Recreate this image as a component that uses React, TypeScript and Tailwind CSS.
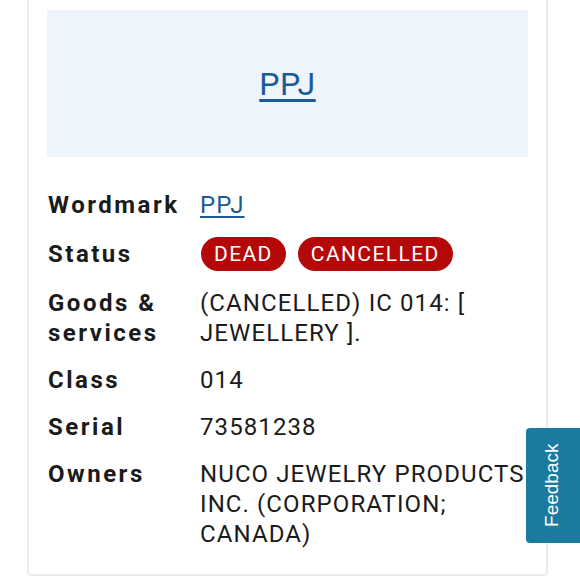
import React from 'react';

const rows: { label: React.ReactNode; value: React.ReactNode }[] = [
    {
        label: 'Wordmark',
        value: <a href="#" className="text-[#1a5a96] underline underline-offset-[3px]">PPJ</a>,
    },
    {
        label: 'Status',
        value: (
            <div className="flex gap-[12px] ml-[1px]">
                <span className="rounded-full bg-[#b50909] text-white px-[13px] h-[34px] flex items-center">DEAD</span>
                <span className="rounded-full bg-[#b50909] text-white px-[13px] h-[34px] flex items-center">CANCELLED</span>
            </div>
        ),
    },
    { label: <>Goods &amp;<br />services</>, value: <>(CANCELLED) IC 014: [<br />JEWELLERY ].</> },
    { label: 'Class', value: '014' },
    { label: 'Serial', value: '73581238' },
    { label: 'Owners', value: 'NUCO JEWELRY PRODUCTS INC. (CORPORATION; CANADA)' },
];

const App: React.FC = () => {
    return (
        <div className="w-[580px] h-[580px] overflow-hidden bg-white relative" style={{ fontFamily: 'Roboto, "Noto Sans", sans-serif' }}>
            <div className="ml-[27px] w-[521px] h-[576px] border-x-2 border-b-2 border-[#ececec] rounded-b-[4px] px-[18px] pt-[10px]">
                <div className="h-[147px] bg-[#edf4fb] flex items-center justify-center">
                    <a href="#" className="text-[32px] text-[#1a5a96] underline underline-offset-[4px] tracking-[0.5px]">PPJ</a>
                </div>

                <div className="mt-[33px] grid grid-cols-[153px_1fr] gap-y-[17px] text-[24px] leading-[30px] text-[#1b1b1b] tracking-[1.1px]">
                    {rows.map((r, i) => (
                        <React.Fragment key={i}>
                            <div className={i === 1 ? 'font-bold tracking-[2.5px] self-center pl-[1px]' : 'font-bold tracking-[2.5px] pl-[1px]'}>{r.label}</div>
                            <div className={i === 1 ? 'text-[21px] tracking-[1.4px]' : ''}>{r.value}</div>
                        </React.Fragment>
                    ))}
                </div>
            </div>

            {/* Feedback tab */}
            <div className="absolute right-0 top-[428px] w-[54px] h-[115px] bg-[#1a7b9e] rounded-l-[4px] flex items-center justify-center">
                <span className="text-white text-[19px] -rotate-90 whitespace-nowrap" style={{ fontFamily: '"Liberation Sans", sans-serif' }}>Feedback</span>
            </div>
        </div>
    );
};

export default App;
